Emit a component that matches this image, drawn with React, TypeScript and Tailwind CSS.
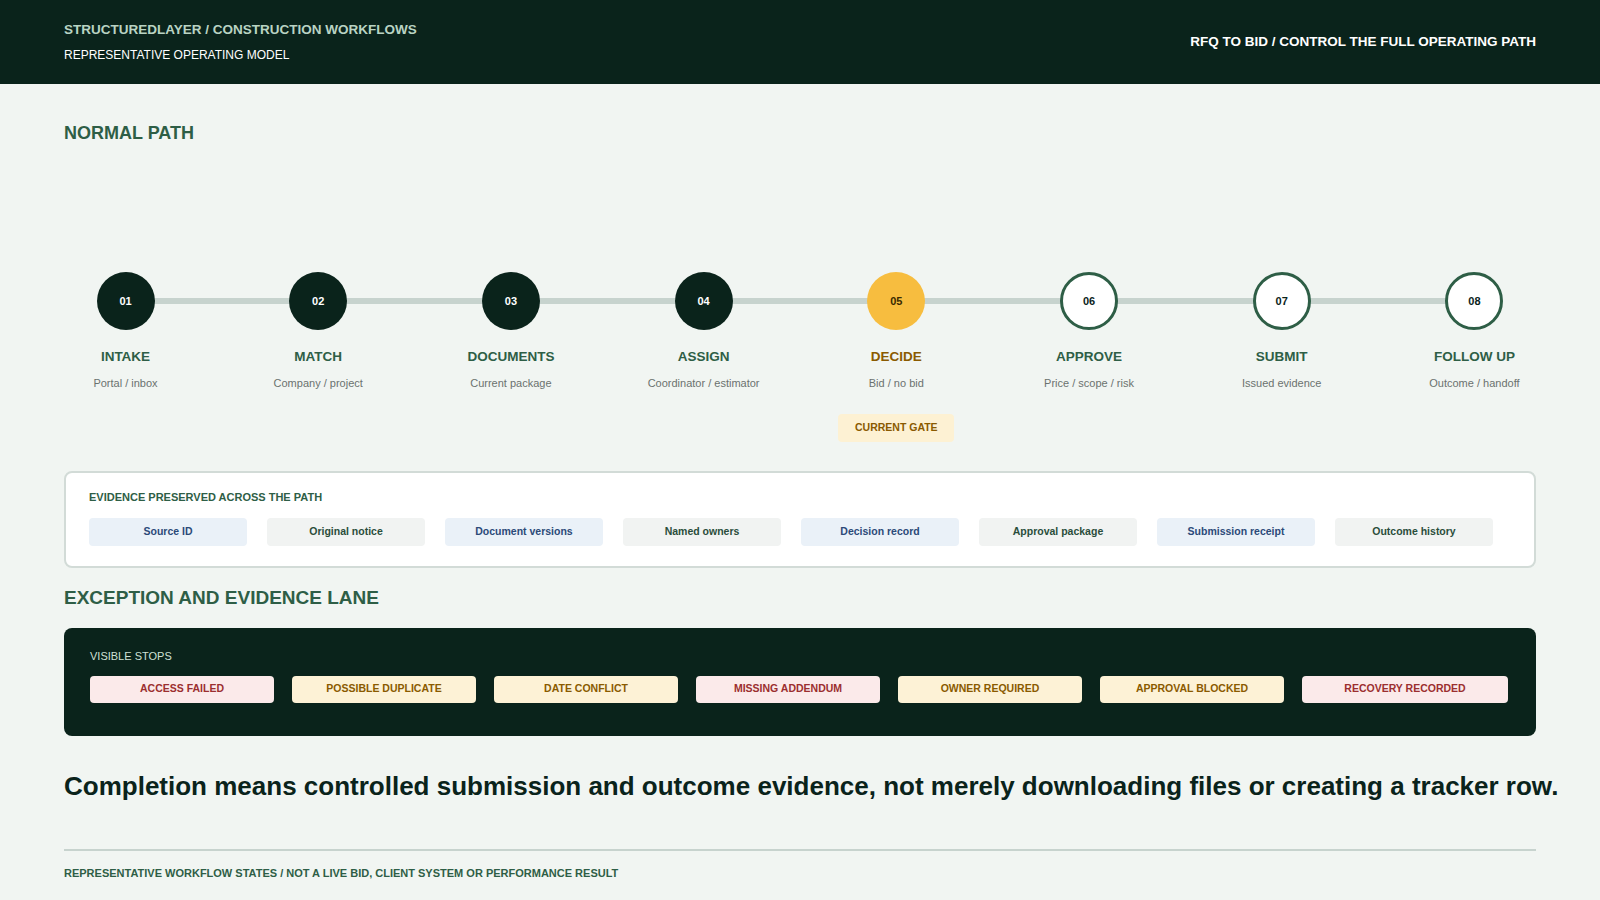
import React from "react";

const steps = [
  ["01", "INTAKE", "Portal / inbox", "done"],
  ["02", "MATCH", "Company / project", "done"],
  ["03", "DOCUMENTS", "Current package", "done"],
  ["04", "ASSIGN", "Coordinator / estimator", "done"],
  ["05", "DECIDE", "Bid / no bid", "current"],
  ["06", "APPROVE", "Price / scope / risk", "todo"],
  ["07", "SUBMIT", "Issued evidence", "todo"],
  ["08", "FOLLOW UP", "Outcome / handoff", "todo"],
];
const evidence = ["Source ID", "Original notice", "Document versions", "Named owners", "Decision record", "Approval package", "Submission receipt", "Outcome history"];
const stops: [string, string][] = [
  ["ACCESS FAILED", "r"], ["POSSIBLE DUPLICATE", "y"], ["DATE CONFLICT", "y"], ["MISSING ADDENDUM", "r"],
  ["OWNER REQUIRED", "y"], ["APPROVAL BLOCKED", "y"], ["RECOVERY RECORDED", "r"],
];

export default function App() {
  return (
    <div className="min-h-[900px] w-[1600px] bg-[#f1f5f2] font-[Liberation_Sans,Arial,sans-serif]">
      <header className="h-[84px] bg-[#0a231b] px-[64px] flex items-center justify-between">
        <div>
          <div className="text-[13.5px] font-bold text-[#b9d3c3] leading-none">STRUCTUREDLAYER / CONSTRUCTION WORKFLOWS</div>
          <div className="text-[12px] text-white mt-[12px] leading-none">REPRESENTATIVE OPERATING MODEL</div>
        </div>
        <div className="text-[13.5px] font-bold text-white">RFQ TO BID / CONTROL THE FULL OPERATING PATH</div>
      </header>
      <main className="px-[64px]">
        <h2 className="pt-[40px] text-[18px] font-bold text-[#2e5e46] leading-none">NORMAL PATH</h2>
        <div className="relative mt-[130px] flex justify-between">
          <div className="absolute left-[61px] right-[61px] top-[26px] h-[6px] bg-[#c7d3ce]" />
          {steps.map(([n, t, s, st]) => (
            <div key={n} className="relative w-[123px] flex flex-col items-center">
              <div
                className={
                  "w-[58px] h-[58px] rounded-full flex items-center justify-center text-[11px] font-bold " +
                  (st === "done"
                    ? "bg-[#0a231b] text-white"
                    : st === "current"
                    ? "bg-[#f7bd3f] text-[#3a2a00]"
                    : "bg-white border-[3px] border-[#2e5e46] text-[#0a231b]")
                }
              >
                {n}
              </div>
              <div className={"mt-[20px] text-[13.5px] font-bold leading-none " + (st === "current" ? "text-[#8a5a00]" : "text-[#2e5e46]")}>{t}</div>
              <div className="mt-[14px] text-[11px] text-[#6b726f] leading-none whitespace-nowrap">{s}</div>
              {st === "current" && (
                <div className="absolute top-[142px] w-[116px] h-[28px] rounded bg-[#fdf1d3] flex items-center justify-center text-[10.5px] font-bold text-[#8a5a00]">CURRENT GATE</div>
              )}
            </div>
          ))}
        </div>
        <section className="mt-[82px] h-[97px] rounded-lg border-2 border-[#d2dbd7] bg-white px-[23px] pt-[19px]">
          <div className="text-[11px] font-bold text-[#2e5e46] leading-none">EVIDENCE PRESERVED ACROSS THE PATH</div>
          <div className="mt-[15px] flex gap-[20px]">
            {evidence.map((e, i) => (
              <div key={e} className={"w-[158px] h-[28px] rounded flex items-center justify-center text-[10.5px] font-bold " + (i % 2 === 0 ? "bg-[#eaf1f8] text-[#2c4a78]" : "bg-[#f1f3f2] text-[#2a4d3b]")}>{e}</div>
            ))}
          </div>
        </section>
        <h2 className="mt-[20px] text-[19px] font-bold text-[#2e5e46] leading-none">EXCEPTION AND EVIDENCE LANE</h2>
        <section className="mt-[21px] h-[108px] rounded-lg bg-[#0a231b] px-[26px] pt-[23px]">
          <div className="text-[11px] text-[#cfe0d5] leading-none">VISIBLE STOPS</div>
          <div className="mt-[14px] flex gap-[18px]">
            {stops.map(([s, c], i) => (
              <div key={s} className={(i === 6 ? "w-[206px] " : "w-[184px] ") + "h-[27px] rounded flex items-center justify-center text-[10.5px] font-bold " + (c === "r" ? "bg-[#fbeaea] text-[#9b2f2f]" : "bg-[#fdf2d6] text-[#8a5a00]")}>{s}</div>
            ))}
          </div>
        </section>
        <p className="mt-[37px] text-[26px] font-bold text-[#0a231b] leading-none whitespace-nowrap">Completion means controlled submission and outcome evidence, not merely downloading files or creating a tracker row.</p>
        <div className="mt-[50px] h-[2px] bg-[#c7d3ce]" />
        <div className="mt-[17px] text-[11px] font-bold text-[#2e5e46] leading-none">REPRESENTATIVE WORKFLOW STATES / NOT A LIVE BID, CLIENT SYSTEM OR PERFORMANCE RESULT</div>
      </main>
    </div>
  );
}
